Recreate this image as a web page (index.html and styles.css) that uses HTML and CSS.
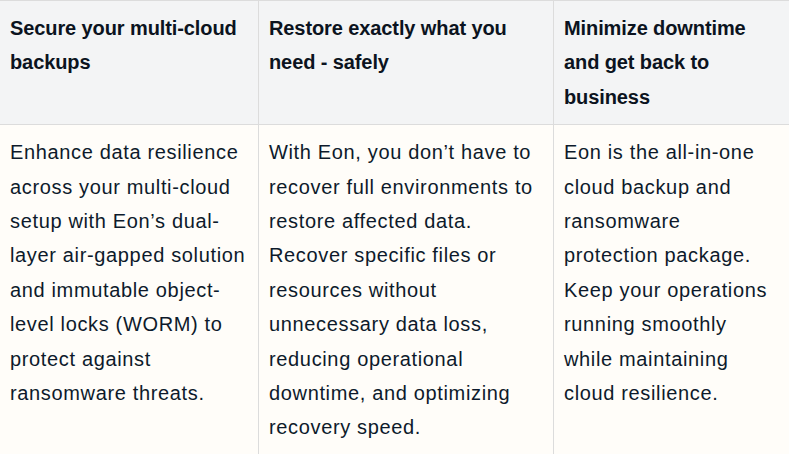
FILE: index.html
```html
<!DOCTYPE html>
<html lang="en">
<head>
<meta charset="utf-8">
<title>Eon backup</title>
<link rel="stylesheet" href="styles.css">
</head>
<body>
<table class="compare">
  <colgroup>
    <col class="c1"><col class="c2"><col class="c3">
  </colgroup>
  <thead>
    <tr>
      <th>Secure your multi-cloud backups</th>
      <th>Restore exactly what you need - safely</th>
      <th>Minimize downtime and get back to business</th>
    </tr>
  </thead>
  <tbody>
    <tr>
      <td>Enhance data resilience across your multi-cloud setup with Eon’s dual-layer air-gapped solution and immutable object-level locks (WORM) to protect against ransomware threats.</td>
      <td>With Eon, you don’t have to recover full environments to restore affected data. Recover specific files or resources without unnecessary data loss, reducing operational downtime, and optimizing recovery speed.</td>
      <td>Eon is the all-in-one cloud backup and ransomware protection package. Keep your operations running smoothly while maintaining cloud resilience.</td>
    </tr>
  </tbody>
</table>
</body>
</html>
```

FILE: styles.css
```css
html, body {
  margin: 0;
  padding: 0;
  background: #fffdf9;
}
body {
  font-family: "Liberation Sans", Arial, sans-serif;
  color: #0d1a2b;
  overflow: hidden;
}
.compare {
  border-collapse: separate;
  border-spacing: 0;
  table-layout: fixed;
  width: 790px;
  border-top: 1px solid #dcdcdc;
}
.c1 { width: 259px; }
.c2 { width: 295px; }
.c3 { width: 236px; }
.compare th,
.compare td {
  text-align: left;
  vertical-align: top;
  font-size: 20px;
  line-height: 34.4px;
  padding: 10px;
  border-right: 1px solid #dcdcdc;
  border-bottom: 1px solid #dcdcdc;
}
.compare th {
  background: #f3f4f5;
  font-weight: 700;
  color: #0b1320;
  height: 103px;
  letter-spacing: -0.1px;
}
.compare td {
  background: #fffdf9;
  font-weight: 400;
  letter-spacing: 0.65px;
}
```
